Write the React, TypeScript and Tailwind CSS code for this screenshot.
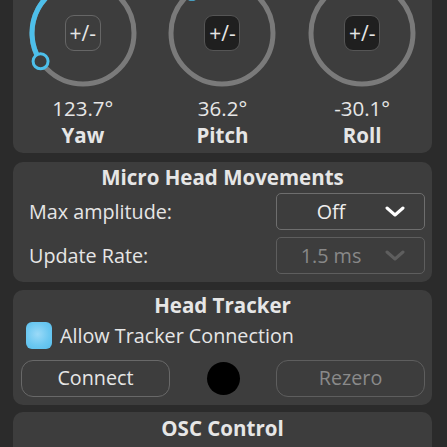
import React from 'react';

const font = { fontFamily: '"Open Sans", "DejaVu Sans", sans-serif' };

// point on a ring, angle in degrees, positive = counter-clockwise from the top
function ringPoint(cx: number, cy: number, r: number, deg: number) {
  const a = (deg * Math.PI) / 180;
  return { x: cx - r * Math.sin(a), y: cy - r * Math.cos(a) };
}

function Knob({ value, label, angle, dark }: { value: string; label: string; angle: number; dark: boolean }) {
  const c = 60;
  const r = 51;
  const end = ringPoint(c, c, r, angle);
  const sweep = angle > 0 ? 0 : 1;
  const large = Math.abs(angle) > 180 ? 1 : 0;
  const arc = `M ${c} ${c - r} A ${r} ${r} 0 ${large} ${sweep} ${end.x} ${end.y}`;

  return (
    <div className="flex flex-col items-center">
      <div className="relative h-[120px] w-[120px]">
        <svg width="120" height="120" viewBox="0 0 120 120" className="block">
          <circle cx={c} cy={c} r={r} fill="none" stroke="#7a7a7a" strokeWidth="5" />
          <path d={arc} fill="none" stroke="#4dbfea" strokeWidth="5" />
          <circle cx={end.x} cy={end.y} r="7.5" fill="#3d3d3d" stroke="#4dbfea" strokeWidth="3" />
        </svg>
        <div
          className={`absolute left-1/2 top-1/2 flex h-[36px] w-[36px] -translate-x-1/2 -translate-y-1/2 items-center justify-center rounded-[9px] border text-[21px] leading-none text-[#e6e6e6] ${
            dark ? 'border-[#555555] bg-[#1f1f1f]' : 'border-[#666666] bg-transparent'
          }`}
        >
          +/-
        </div>
      </div>
      <div className="mt-[3px] text-[20.5px] leading-[24px] text-[#e6e6e6]">{value}</div>
      <div className="mt-[3px] text-[20.5px] font-bold leading-[24px] text-[#e6e6e6]">{label}</div>
    </div>
  );
}

function Chevron({ color }: { color: string }) {
  return (
    <svg width="20" height="12" viewBox="0 0 20 12" className="block">
      <path d="M2 2 L10 9 L18 2" fill="none" stroke={color} strokeWidth="3" strokeLinecap="round" strokeLinejoin="round" />
    </svg>
  );
}

function Dropdown({ text, disabled }: { text: string; disabled?: boolean }) {
  return (
    <div
      className={`flex h-[37px] w-[149px] items-center rounded-[5px] border ${
        disabled ? 'border-[#5e5e5e]' : 'border-[#6e6e6e]'
      }`}
    >
      <span className={`flex-1 text-center text-[19.75px] ${disabled ? 'text-[#888888]' : 'text-[#eeeeee]'}`}>{text}</span>
      <span className="mr-[19px]">
        <Chevron color={disabled ? '#5e5e5e' : '#ffffff'} />
      </span>
    </div>
  );
}

function Title({ children }: { children: React.ReactNode }) {
  return <div className="text-center text-[20.5px] font-bold leading-[26px] text-[#e6e6e6]">{children}</div>;
}

export default function App() {
  return (
    <div className="h-[447px] w-[447px] overflow-hidden bg-[#2b2b2b]" style={font}>
      <div className="-mt-[40px] flex flex-col">
        <div className="ml-[13px] w-[419px] rounded-[10px] bg-[#3d3d3d] pb-[6px] pt-[13px]">
          <div className="grid grid-cols-3">
            <Knob value="123.7°" label="Yaw" angle={123.7} dark={false} />
            <Knob value="36.2°" label="Pitch" angle={36.2} dark />
            <Knob value="-30.1°" label="Roll" angle={-30.1} dark />
          </div>
        </div>

        <div className="ml-[13px] mt-[9px] w-[419px] rounded-[10px] bg-[#3d3d3d] pb-[8px] pt-[2px]">
          <Title>Micro Head Movements</Title>
          <div className="mt-[3px] flex items-center justify-between pl-[16px] pr-[7px]">
            <span className="text-[19.75px] text-[#e6e6e6]">Max amplitude:</span>
            <Dropdown text="Off" />
          </div>
          <div className="mt-[7px] flex items-center justify-between pl-[16px] pr-[7px]">
            <span className="text-[19.75px] text-[#e6e6e6]">Update Rate:</span>
            <Dropdown text="1.5 ms" disabled />
          </div>
        </div>

        <div className="ml-[13px] mt-[8px] w-[419px] rounded-[10px] bg-[#3d3d3d] pb-[8px] pt-[2px]">
          <Title>Head Tracker</Title>
          <div className="mt-[3px] flex items-center gap-[8px] pl-[13px]">
            <div className="h-[27px] w-[26px] rounded-[6px] bg-[radial-gradient(circle_at_45%_45%,#9bdaf8_0%,#6cc8f1_55%,#55bdec_100%)]" />
            <span className="text-[19.75px] text-[#e6e6e6]">Allow Tracker Connection</span>
          </div>
          <div className="mt-[9px] flex items-center justify-between pl-[8px] pr-[7px]">
            <div className="flex h-[37px] w-[149px] items-center justify-center rounded-[12px] border border-[#686868] text-[19.75px] text-[#e6e6e6]">
              Connect
            </div>
            <div className="h-[33px] w-[33px] rounded-full bg-black" />
            <div className="flex h-[37px] w-[149px] items-center justify-center rounded-[12px] border border-[#5e5e5e] text-[19.75px] text-[#8a8a8a]">
              Rezero
            </div>
          </div>
        </div>

        <div className="ml-[13px] mt-[7px] h-[100px] w-[419px] rounded-[10px] bg-[#3d3d3d] pt-[3px]">
          <Title>OSC Control</Title>
        </div>
      </div>
    </div>
  );
}
